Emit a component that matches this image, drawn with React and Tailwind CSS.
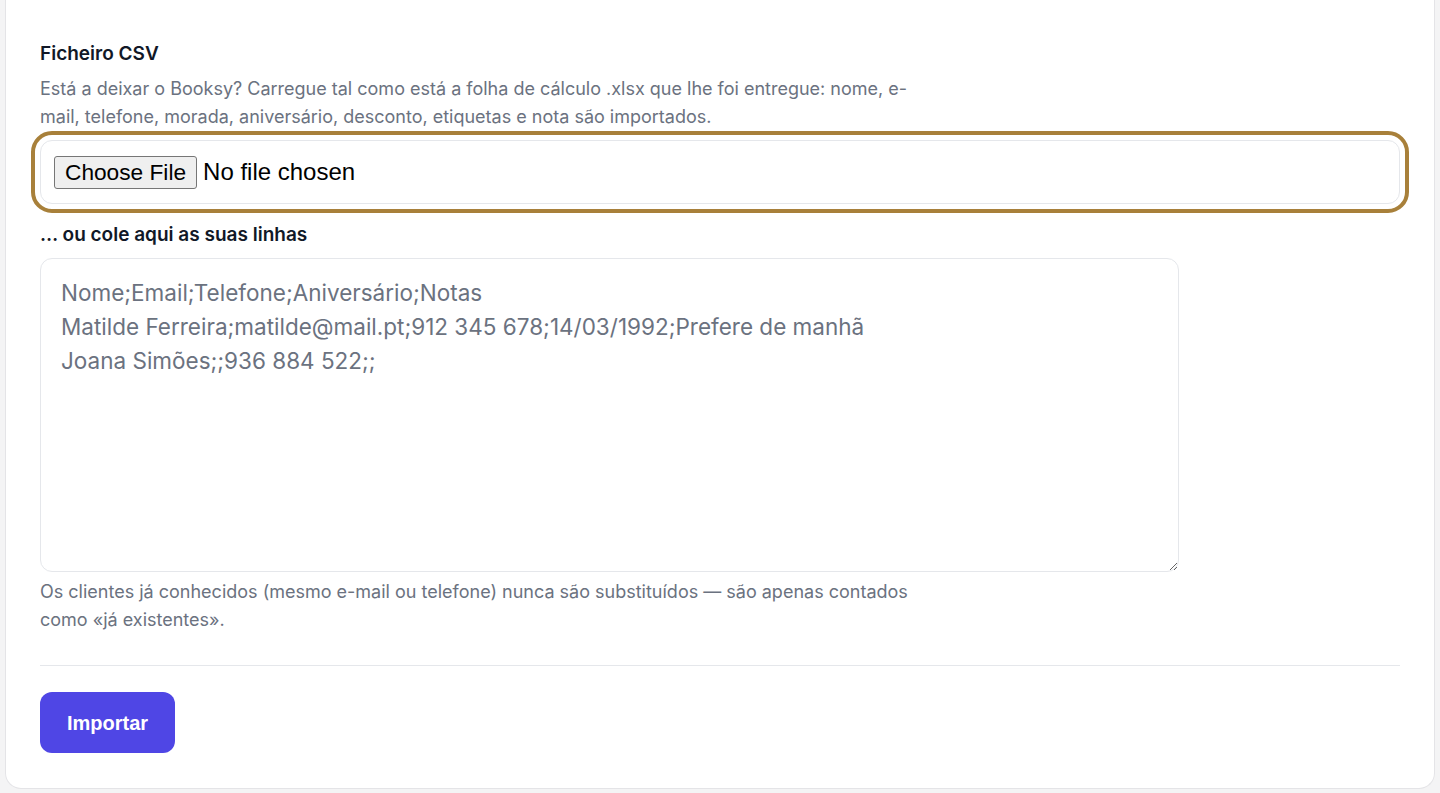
import React from "react";

export default function App() {
  return (
    <div className="min-h-[793px] bg-[#f4f4f5] font-['Inter',sans-serif]">
      <div className="mx-[5px] rounded-b-2xl border-x border-b border-[#e4e4e7] bg-white px-[34px] pt-[42px] pb-[35px]">
        <label className="block text-[19px] leading-[24px] font-semibold text-[#111827]">Ficheiro CSV</label>
        <p className="mt-[9px] max-w-[880px] text-[18px] leading-[28px] text-[#6b7280]">
          Está a deixar o Booksy? Carregue tal como está a folha de cálculo .xlsx que lhe foi entregue: nome, e-mail, telefone, morada, aniversário, desconto, etiquetas e nota são importados.
        </p>
        <div className="mt-[9px]">
          <input
            type="file"
            className="block w-full rounded-xl border border-[#e5e7eb] bg-white px-[13px] py-[14px] font-['Liberation_Sans',Arial,sans-serif] text-[24px] leading-[33px] text-black outline-4 outline-offset-[5px] outline-[#a8803a] file:mr-[6px] file:rounded-[3px] file:border file:border-[#767676] file:bg-[#efefef] file:px-[10px] file:py-[1px] file:font-['Liberation_Sans',Arial,sans-serif] file:text-[22.7px] file:leading-[29px] file:text-black"
          />
        </div>
        <label className="mt-[19px] block text-[19px] leading-[24px] font-semibold text-[#111827]">… ou cole aqui as suas linhas</label>
        <textarea
          className="mt-[11px] block h-[314px] w-[1139px] rounded-xl border border-[#e5e7eb] bg-white px-[20px] pt-[17px] text-[22.5px] leading-[34px] text-[#6b7280] placeholder:text-[#6b7280]"
          placeholder={"Nome;Email;Telefone;Aniversário;Notas\nMatilde Ferreira;matilde@mail.pt;912 345 678;14/03/1992;Prefere de manhã\nJoana Simões;;936 884 522;;"}
        />
        <p className="mt-[6px] max-w-[880px] text-[18px] leading-[28px] text-[#6b7280]">
          Os clientes já conhecidos (mesmo e-mail ou telefone) nunca são substituídos — são apenas contados como «já existentes».
        </p>
        <div className="mt-[31px] border-t border-[#e5e7eb]" />
        <button className="mt-[26px] h-[61px] rounded-xl bg-[#4f46e5] px-[27px] font-['Liberation_Sans',Arial,sans-serif] text-[20px] font-bold text-white">
          Importar
        </button>
      </div>
    </div>
  );
}
